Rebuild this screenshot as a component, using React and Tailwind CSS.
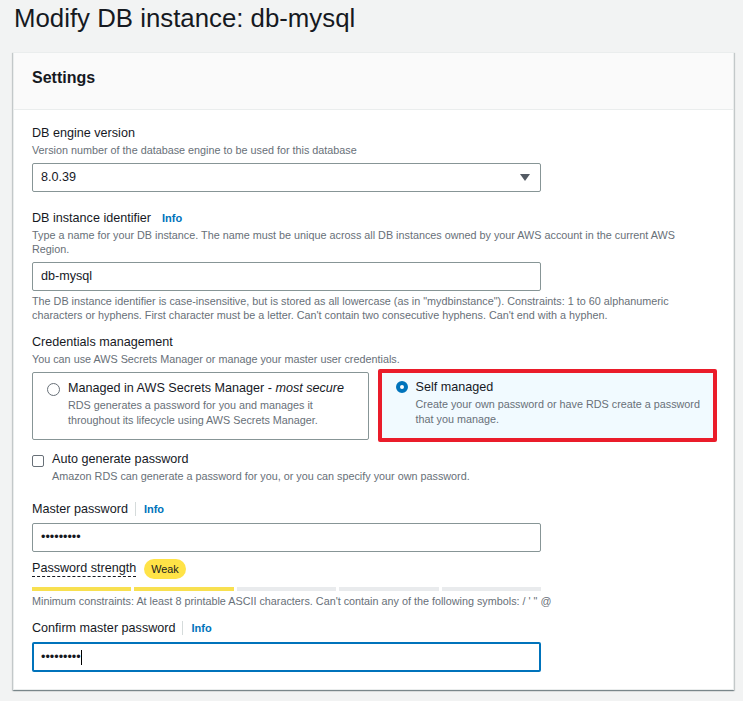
import { useState } from 'react';

const SEGMENTS = [true, true, false, false, false];

function Info() {
  return <span className="text-[11px] font-bold text-[#0073bb]">Info</span>;
}

function Label({ children, info, divider }) {
  return (
    <div className="flex items-center h-[20px] text-[12.6px] leading-[20px]">
      <span>{children}</span>
      {info && divider && <span className="ml-[7px] mr-[8px] h-[14px] w-px bg-[#d5dbdb]" />}
      {info && !divider && <span className="w-[11px]" />}
      {info && <Info />}
    </div>
  );
}

function Desc({ children, className = '' }) {
  return <p className={`text-[10.8px] leading-[14.5px] text-[#687078] ${className}`}>{children}</p>;
}

function Input({ children, focused, className = '' }) {
  return (
    <div
      className={`w-[509px] h-[29px] flex items-center px-[8px] text-[12.6px] rounded-[2px] bg-white ${
        focused ? 'border-2 border-[#0073bb] pl-[7px] h-[30px]' : 'border border-[#879596]'
      } ${className}`}
    >
      {children}
    </div>
  );
}

export default function App() {
  const [mode] = useState('self');

  return (
    <div className="min-h-screen bg-[#f2f3f3] text-[#16191f] font-['Liberation_Sans',Arial,sans-serif]">
      <h1 className="pl-[14px] pt-[3px] text-[25.8px] leading-[30px] font-normal">Modify DB instance: db-mysql</h1>

      <div className="mt-[19px] ml-[13px] mr-[9px] bg-white border border-[#eaeded] shadow-[0_1px_1px_0_rgba(0,28,36,0.3),1px_1px_1px_0_rgba(0,28,36,0.15),-1px_1px_1px_0_rgba(0,28,36,0.15)]">
        <div className="h-[57px] pt-[15px] px-[18px] bg-[#fafafa] border-b border-[#eaeded]">
          <h2 className="text-[16px] leading-[20px] font-bold">Settings</h2>
        </div>

        <div className="px-[18px] pt-[13px] pb-[17px]">
          {/* engine version */}
          <Label>DB engine version</Label>
          <Desc>Version number of the database engine to be used for this database</Desc>
          <div className="mt-[5px] w-[509px] h-[29px] flex items-center justify-between pl-[8px] pr-[10px] text-[12.6px] border border-[#879596] rounded-[2px]">
            <span>8.0.39</span>
            <svg width="10" height="7" viewBox="0 0 10 7">
              <path d="M0 0h10L5 7z" fill="#545b64" />
            </svg>
          </div>

          {/* identifier */}
          <div className="mt-[16px]">
            <Label info>DB instance identifier</Label>
          </div>
          <Desc>
            Type a name for your DB instance. The name must be unique across all DB instances owned by your AWS account in the current AWS
            <br />
            Region.
          </Desc>
          <Input className="mt-[5px]">db-mysql</Input>
          <Desc className="mt-[3px]">
            The DB instance identifier is case-insensitive, but is stored as all lowercase (as in "mydbinstance"). Constraints: 1 to 60 alphanumeric
            <br />
            characters or hyphens. First character must be a letter. Can't contain two consecutive hyphens. Can't end with a hyphen.
          </Desc>

          {/* credentials */}
          <div className="mt-[9px]">
            <Label>Credentials management</Label>
          </div>
          <Desc>You can use AWS Secrets Manager or manage your master user credentials.</Desc>
          <div className="mt-[6px] grid grid-cols-2 gap-[10px]">
            <div className="h-[68px] border border-[#879596] rounded-[2px] pl-[14px] pt-[5px] flex gap-[8px]">
              <span className={`mt-[5px] w-[13px] h-[13px] rounded-full shrink-0 ${mode === 'aws' ? 'border-4 border-[#0073bb]' : 'border border-[#687078]'}`} />
              <div>
                <div className="text-[12.6px] leading-[20px]">
                  Managed in AWS Secrets Manager - <i>most secure</i>
                </div>
                <Desc>
                  RDS generates a password for you and manages it
                  <br />
                  throughout its lifecycle using AWS Secrets Manager.
                </Desc>
              </div>
            </div>
            <div className="relative h-[68px] bg-[#f1faff] rounded-[2px] pl-[17px] pt-[5px] flex gap-[8px]">
              <span className="mt-[4px] w-[12px] h-[12px] rounded-full border-4 border-[#0073bb] bg-white shrink-0" />
              <div>
                <div className="text-[12.6px] leading-[20px]">Self managed</div>
                <Desc>
                  Create your own password or have RDS create a password
                  <br />
                  that you manage.
                </Desc>
              </div>
              <div className="absolute -top-[3px] -bottom-[2px] -left-[1px] -right-[2px] border-4 border-[#ea1c2a] rounded-[2px]" />
            </div>
          </div>

          {/* auto generate */}
          <div className="mt-[9px] flex gap-[8px]">
            <span className="mt-[6px] w-[12px] h-[12px] border border-[#687078] rounded-[2px] shrink-0" />
            <div>
              <div className="text-[12.6px] leading-[20px]">Auto generate password</div>
              <Desc>Amazon RDS can generate a password for you, or you can specify your own password.</Desc>
            </div>
          </div>

          {/* master password */}
          <div className="mt-[15px]">
            <Label info divider>Master password</Label>
          </div>
          <Input className="mt-[4px]">•••••••••</Input>
          <div className="mt-[7px] flex items-center h-[20px] gap-[8px]">
            <span className="text-[12.6px] leading-[16px] border-b border-dashed border-[#16191f]">Password strength</span>
            <span className="h-[20px] px-[7px] rounded-full bg-[#ffe347] text-[10.8px] leading-[20px]">Weak</span>
          </div>
          <div className="mt-[8px] w-[509px] flex gap-[3px]">
            {SEGMENTS.map((on, i) => (
              <span key={i} className={`flex-1 h-[4px] ${on ? 'bg-[#f8e050]' : 'bg-[#e9ebed]'}`} />
            ))}
          </div>
          <Desc className="mt-[3px]">
            Minimum constraints: At least 8 printable ASCII characters. Can't contain any of the following symbols: / ' " @
          </Desc>

          {/* confirm */}
          <div className="mt-[10px]">
            <Label info divider>Confirm master password</Label>
          </div>
          <Input focused className="mt-[4px]">
            <span>•••••••••</span>
            <span className="w-px h-[15px] bg-black" />
          </Input>
        </div>
      </div>
    </div>
  );
}
